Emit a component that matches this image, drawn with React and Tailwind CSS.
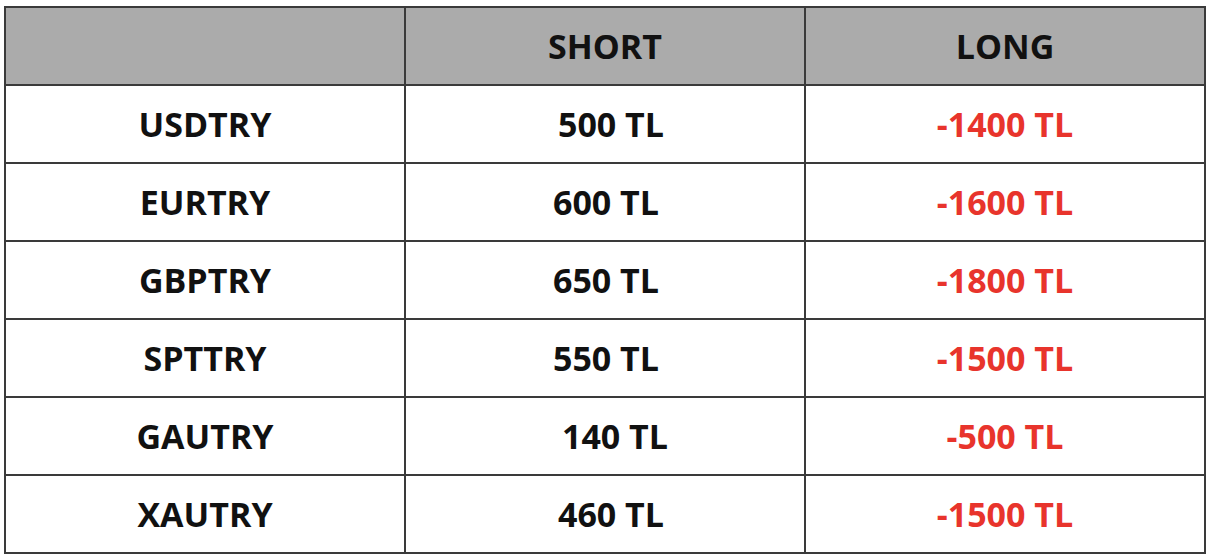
import React from 'react';

const rows = [
  { pair: 'USDTRY', short: '500 TL', long: '-1400 TL', shortPad: 'pl-[12px]' },
  { pair: 'EURTRY', short: '600 TL', long: '-1600 TL', shortPad: 'pl-[2px]' },
  { pair: 'GBPTRY', short: '650 TL', long: '-1800 TL', shortPad: 'pl-[2px]' },
  { pair: 'SPTTRY', short: '550 TL', long: '-1500 TL', shortPad: 'pl-[2px]' },
  { pair: 'GAUTRY', short: '140 TL', long: '-500 TL', shortPad: 'pl-[20px]' },
  { pair: 'XAUTRY', short: '460 TL', long: '-1500 TL', shortPad: 'pl-[12px]' },
];

const cell = 'border-2 border-[#3a3a3a] text-center align-middle';

export default function App() {
  return (
    <div className="w-[1210px] h-[558px] bg-white pt-[6px] pl-[4px] font-['Open_Sans',sans-serif] font-bold text-[34px] text-[#111]">
      <table className="border-collapse table-fixed w-[1201px]">
        <thead>
          <tr className="h-[78px] bg-[#ababab]">
            <th className={`${cell} w-[400px]`}></th>
            <th className={`${cell} w-[400px]`}>SHORT</th>
            <th className={`${cell} w-[400px]`}>LONG</th>
          </tr>
        </thead>
        <tbody>
          {rows.map((r) => (
            <tr key={r.pair} className="h-[78px]">
              <td className={cell}>{r.pair}</td>
              <td className={`${cell} ${r.shortPad}`}>{r.short}</td>
              <td className={`${cell} text-[#e8342c]`}>{r.long}</td>
            </tr>
          ))}
        </tbody>
      </table>
    </div>
  );
}
